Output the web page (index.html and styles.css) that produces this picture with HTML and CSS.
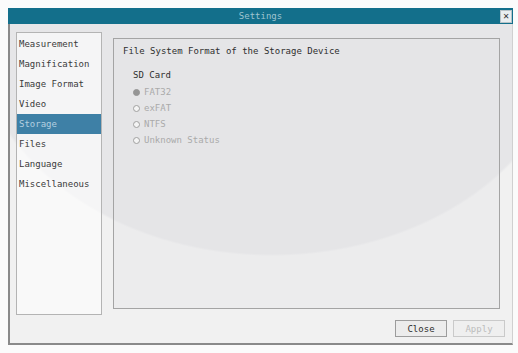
FILE: index.html
```html
<!DOCTYPE html>
<html lang="en">
<head>
  <meta charset="UTF-8" />
  <title>Settings</title>
  <link rel="stylesheet" href="styles.css">
</head>
<body>

<div class="window">
  <div class="titlebar">
    <span class="title">Settings</span>
    <button class="close-x">&#x2715;</button>
  </div>

  <div class="body">
    <div class="content">
      <ul class="menu">
        <li>Measurement</li>
        <li>Magnification</li>
        <li>Image Format</li>
        <li>Video</li>
        <li class="active">Storage</li>
        <li>Files</li>
        <li>Language</li>
        <li>Miscellaneous</li>
      </ul>

      <div class="panel">
        <h2>File System Format of the Storage Device</h2>
        <div class="group">
          <h3>SD Card</h3>
          <label class="radio checked"><span class="dot"></span>FAT32</label>
          <label class="radio"><span class="dot"></span>exFAT</label>
          <label class="radio"><span class="dot"></span>NTFS</label>
          <label class="radio"><span class="dot"></span>Unknown Status</label>
        </div>
      </div>
    </div>

    <div class="actions">
      <button class="btn">Close</button>
      <button class="btn" disabled>Apply</button>
    </div>
  </div>
</div>

</body>
</html>
```

FILE: styles.css
```css
body { margin: 0; padding: 8px; background: #fbfbfb; font-family: "DejaVu Sans Mono", monospace; font-size: 9px; color: #3a3a3a; }
.window { width: 505px; height: 337px; box-sizing: border-box; display: flex; flex-direction: column; border-left: 2px solid #8a8a8a; border-bottom: 2px solid #8a8a8a; border-right: 1px solid #d0d0d0; }
.titlebar { height: 16px; background: #136f8b; display: flex; align-items: center; justify-content: center; position: relative; margin-left: -2px; margin-right: -1px; }
.title { color: #9fc4d0; font-size: 9px; }
.close-x { position: absolute; right: 1px; top: 2px; width: 12px; height: 13px; padding: 0; border: 1px solid #b8c4c8; background: #e9eef0; color: #333; font-size: 8px; line-height: 11px; font-family: "DejaVu Sans", sans-serif; }
.body { flex: 1; display: flex; flex-direction: column; padding: 8px 7px 0 6px;
  background: radial-gradient(ellipse 300px 232px at 262px 0, #e6e6e8 99%, #f1f1f1 100%); }
.content { display: flex; align-items: flex-start; gap: 11px; }
.menu { list-style: none; margin: 0; padding: 1px 0; width: 86px; height: 283px; box-sizing: border-box; border: 1px solid #b4b4b4; background: rgba(255,255,255,0.6); }
.menu li { height: 20px; line-height: 20px; padding-left: 2px; }
.menu li.active { background: #3e80a6; color: #b4cfe0; }
.panel { margin-top: 6px; width: 387px; height: 271px; box-sizing: border-box; border: 1px solid #a4a4a4; padding: 5px 9px; background: rgba(225,225,228,0.35); }
.panel h2 { margin: 0; font-size: 9px; font-weight: normal; line-height: 14px; color: #2e2e2e; }
.group { padding: 10px 0 0 10px; }
.group h3 { margin: 0 0 2px; font-size: 9px; font-weight: normal; line-height: 14px; color: #2e2e2e; }
.radio { display: flex; align-items: center; gap: 4px; height: 16px; color: #aaaaaa; }
.dot { width: 5px; height: 5px; border: 1.5px solid #a0a0a0; border-radius: 50%; background: #f4f4f4; }
.radio.checked .dot { background: #959595; border-color: #959595; }
.actions { display: flex; justify-content: flex-end; gap: 6px; margin-top: 5px; }
.btn { width: 52px; height: 17px; padding: 0; font-family: "DejaVu Sans Mono", monospace; font-size: 9px; color: #2e2e2e; background: #ececec; border: 1px solid #9c9c9c; }
.btn:disabled { color: #bcbcbc; border-color: #cacaca; background: #efefef; }
```
